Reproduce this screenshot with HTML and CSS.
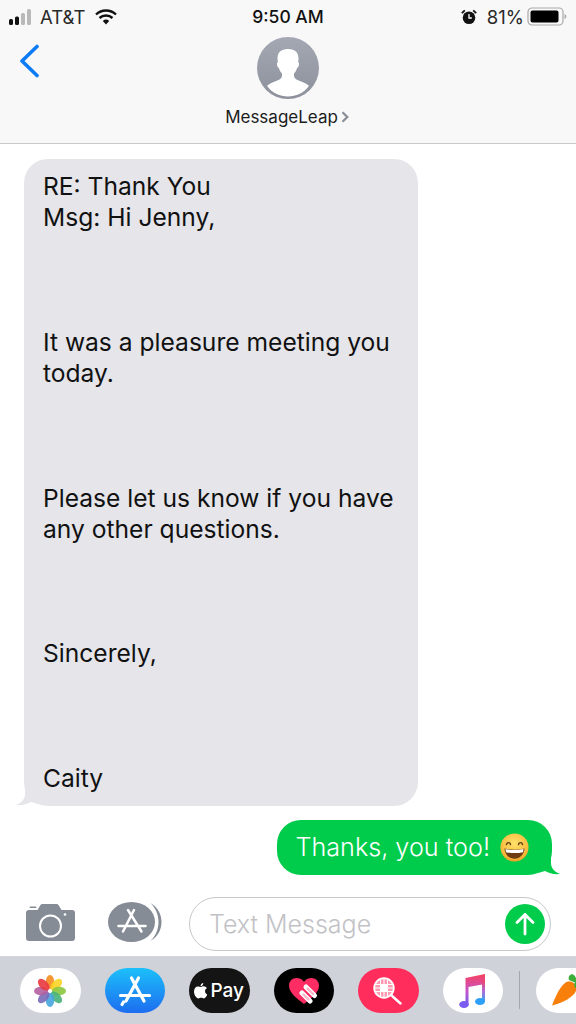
FILE: index.html
```html
<!DOCTYPE html>
<html lang="en">
<head>
<meta charset="utf-8">
<title>Messages</title>
<link rel="stylesheet" href="styles.css">
</head>
<body>
<div class="phone">
  <header class="top">
    <div class="status">
      <div class="status-left">
        <svg class="signal" width="26" height="16" viewBox="0 0 26 16"><rect x="0" y="10" width="4" height="6" rx="1.5" fill="#111"/><rect x="6" y="7.500" width="4" height="8.500" rx="1.500" fill="#111"/><rect x="12" y="4" width="4" height="12" rx="1.500" fill="#b9b9b9"/><rect x="18" y="0" width="4" height="16" rx="1.500" fill="#b9b9b9"/></svg>
        <span class="carrier">AT&amp;T</span>
        <svg class="wifi" width="22" height="16" viewBox="0 0 22 16"><path d="M1 5.500a14.500 14.500 0 0 1 20 0" fill="none" stroke="#111" stroke-width="2.400"/><path d="M4.500 9a9.500 9.500 0 0 1 13 0" fill="none" stroke="#111" stroke-width="2.400"/><path d="M7.800 11.900a4.700 4.700 0 0 1 6.400 0L11 15.500z" fill="#111"/></svg>
      </div>
      <div class="clock">9:50 AM</div>
      <div class="status-right">
        <svg class="alarm" width="16" height="16" viewBox="0 0 16 16"><circle cx="8" cy="8.800" r="6.300" fill="#111"/><path d="M8 5v4l2.800 0" fill="none" stroke="#fff" stroke-width="1.300"/><path d="M.8 4.200 3.800 1.300M15.200 4.200 12.200 1.300" stroke="#111" stroke-width="1.800"/></svg>
        <span class="pct">81%</span>
        <svg class="battery" width="40" height="19" viewBox="0 0 40 19"><rect x="1" y="1" width="35" height="17" rx="4" fill="none" stroke="#a9a9a9" stroke-width="1.200"/><rect x="3.500" y="3.500" width="28" height="12" rx="2" fill="#000"/><path d="M37.500 7v5c1.300-.5 1.800-1.400 1.800-2.500S38.800 7.500 37.500 7z" fill="#a9a9a9"/></svg>
      </div>
    </div>
    <div class="nav">
      <svg class="back" width="22" height="34" viewBox="0 0 22 34"><path d="M19 2.500 4 17l15 14.500" fill="none" stroke="#0b7cf5" stroke-width="3.600" stroke-linecap="round" stroke-linejoin="round"/></svg>
      <div class="contact">
        <svg class="avatar" width="62" height="62" viewBox="0 0 62 62">
          <defs><linearGradient id="av" x1="0" y1="0" x2="0" y2="1"><stop offset="0" stop-color="#a4a8b3"/><stop offset="1" stop-color="#8d919c"/></linearGradient></defs>
          <circle cx="31" cy="31" r="31" fill="url(#av)"/>
          <path d="M30.500 12c-6.500 0-10 3.500-10 9.500 0 1 .2 2.500 .3 4-.8 0-1 .8-.8 2 .2 1.800 .8 3.200 1.800 3.300 .7 2.700 2 4.500 3.200 5.700 .3 3.200-.5 5-2.500 6-3.500 1.600-8 2.700-12.500 6.300C15.500 56.500 23 59.500 31 59.500s15.500-3 21-10.700c-4.500-3.600-9-4.700-12.500-6.300-2-1-2.800-2.800-2.500-6 1.200-1.200 2.500-3 3.200-5.700 1-.1 1.600-1.500 1.800-3.300 .2-1.200 0-2-.8-2 .1-1.500 .3-3 .3-4 0-6-3.500-9.500-10-9.500z" fill="#fff"/>
        </svg>
        <div class="contact-name"><span>MessageLeap</span><svg width="8" height="12" viewBox="0 0 8 12"><path d="M1.500 1.200 6.300 6l-4.800 4.800" fill="none" stroke="#8b8f98" stroke-width="2.300"/></svg></div>
      </div>
    </div>
  </header>

  <main class="thread">
    <div class="bubble-row in">
      <div class="bubble grey">
        <p>RE: Thank You<br>Msg: Hi Jenny,<br><br><br><br>It was a pleasure meeting you<br>today.<br><br><br><br>Please let us know if you have<br>any other questions.<br><br><br><br>Sincerely,<br><br><br><br>Caity</p>
        <svg class="tail tail-in" width="22" height="20" viewBox="0 0 22 20"><path d="M9 0v8C9 13 6 16.500 0 19c6 .5 11-.5 15-3l7 2V0z" fill="#e5e5ea"/></svg>
      </div>
    </div>
    <div class="bubble-row out">
      <div class="bubble green">
        <span>Thanks, you too!</span>
        <svg class="emoji" width="29" height="29" viewBox="0 0 29 29">
          <defs><radialGradient id="em" cx=".5" cy=".35" r=".75"><stop offset="0" stop-color="#ffe16b"/><stop offset=".7" stop-color="#f7b93a"/><stop offset="1" stop-color="#e08a1e"/></radialGradient></defs>
          <circle cx="14.500" cy="14.500" r="14" fill="url(#em)"/>
          <path d="M6.500 11.500c.5-2.500 3.500-2.500 4 0M18.500 11.500c.5-2.500 3.500-2.500 4 0" fill="none" stroke="#5d3a12" stroke-width="1.400" stroke-linecap="round"/>
          <path d="M4.500 15.500c6.500 1.600 13.500 1.600 20 0-.2 6-4.500 10.200-10 10.200s-9.800-4.200-10-10.200z" fill="#6d3c10"/>
          <path d="M5.500 16c6 1.300 12 1.300 18 0l-.4 3.200c-5.500 1.200-11.700 1.200-17.200 0z" fill="#fff"/>
        </svg>
        <svg class="tail tail-out" width="22" height="20" viewBox="0 0 22 20"><path d="M13 0v8c0 5 3 8.500 9 11-6 .5-11-.5-15-3l-7 2V0z" fill="#00cc4c"/></svg>
      </div>
    </div>
  </main>

  <div class="composer">
    <svg class="camera" width="49" height="37" viewBox="0 0 49 37"><rect x="3.500" y="2.500" width="7" height="1.600" rx=".8" fill="#868c96"/><path d="M3 6h8.500l2.500-4.300C14.600 .6 15.400 0 16.600 0h13.800c1.200 0 2 .6 2.600 1.700L35.500 6H46c2 0 3 1 3 3v25c0 2-1 3-3 3H3c-2 0-3-1-3-3V9c0-2 1-3 3-3z" fill="#868c96"/><circle cx="24.500" cy="22" r="10.500" fill="none" stroke="#fff" stroke-width="2"/><circle cx="39" cy="10.500" r="1.300" fill="#fff"/></svg>
    <svg class="apps" width="54" height="40" viewBox="0 0 54 40"><ellipse cx="23.500" cy="20" rx="23.500" ry="20" fill="#868c96"/><path d="M42.500 1C49.500 5 53.500 12 53.500 20S49.500 35 42.500 39C47.500 34 50.500 27.500 50.500 20S47.500 6 42.500 1z" fill="#868c96"/><path d="M26 8 15 29.500M20 8l13.500 21.500M10.500 24h27" fill="none" stroke="#fff" stroke-width="2.500" stroke-linecap="round"/></svg>
    <div class="field">
      <span class="placeholder">Text Message</span>
      <svg class="send" width="40" height="40" viewBox="0 0 40 40"><circle cx="20" cy="20" r="20" fill="#00cc4c"/><path d="M20 30V10.500M12 18.500l8-8 8 8" fill="none" stroke="#fff" stroke-width="2.800" stroke-linecap="round" stroke-linejoin="round"/></svg>
    </div>
  </div>

  <nav class="drawer">
    <div class="pill white">
      <svg width="32" height="32" viewBox="0 0 34 34">
        <g transform="translate(17 17)">
          <ellipse cy="-9.500" rx="4.500" ry="7.500" fill="#f68b1f" fill-opacity=".9"/>
          <ellipse cy="-9.500" rx="4.500" ry="7.500" fill="#f9d423" fill-opacity=".9" transform="rotate(45)"/>
          <ellipse cy="-9.500" rx="4.500" ry="7.500" fill="#8cc63f" fill-opacity=".9" transform="rotate(90)"/>
          <ellipse cy="-9.500" rx="4.500" ry="7.500" fill="#48b37a" fill-opacity=".9" transform="rotate(135)"/>
          <ellipse cy="-9.500" rx="4.500" ry="7.500" fill="#45a5e0" fill-opacity=".9" transform="rotate(180)"/>
          <ellipse cy="-9.500" rx="4.500" ry="7.500" fill="#7a6bb8" fill-opacity=".9" transform="rotate(225)"/>
          <ellipse cy="-9.500" rx="4.500" ry="7.500" fill="#b45fa0" fill-opacity=".9" transform="rotate(270)"/>
          <ellipse cy="-9.500" rx="4.500" ry="7.500" fill="#e8383f" fill-opacity=".9" transform="rotate(315)"/>
        </g>
      </svg>
    </div>
    <div class="pill blue">
      <svg width="36" height="32" viewBox="0 0 36 32"><path d="M21.500 3 9 26M14.500 3 27 26M3.500 20.500h29M6.500 27l-1.500 2.500" fill="none" stroke="#fff" stroke-width="3.200" stroke-linecap="round"/></svg>
    </div>
    <div class="pill black pay">
      <svg width="13" height="16" viewBox="0 0 14 17"><path d="M10 0c.1 1.600-1.300 3.500-3 3.500C6.800 1.900 8.400.2 10 0zM7.100 4.300c.9 0 1.900-.8 3.300-.8 1.500 0 2.800.8 3.400 2-2.900 1.700-2.400 5.600.6 6.800-.7 1.800-2.200 4.200-3.700 4.200-1.200 0-1.600-.7-3-.7s-1.900.7-3 .7C2.600 16.500 0 12.500 0 9c0-3.400 2.200-5.400 4.200-5.400 1.300 0 2.200.7 2.900.7z" fill="#fff"/></svg>
      <span>Pay</span>
    </div>
    <div class="pill black heart">
      <svg width="30" height="26" viewBox="0 0 30 26"><path d="M15 26C9 21 0 15.500 0 7.500 0 3 3.500 0 7.500 0 10.800 0 13.500 1.500 15 4c1.500-2.500 4.200-4 7.500-4C26.500 0 30 3 30 7.500 30 15.500 21 21 15 26z" fill="#ff2d64"/><path d="M13 15l8 8" stroke="#fff" stroke-width="5" stroke-linecap="round"/><path d="M17 9l8.500 8.500" stroke="#fff" stroke-width="5" stroke-linecap="round"/><path d="M14.500 16.500l5 5M18.500 10.500l5.500 5.500" stroke="#f7b6c6" stroke-width="2.400" stroke-linecap="round"/></svg>
    </div>
    <div class="pill pink">
      <svg width="30" height="28" viewBox="0 0 30 28"><circle cx="11" cy="11" r="9.800" fill="#ff9ab0" stroke="#fff" stroke-width="1.800"/><path d="M2 7.500h18M1.500 11h19M2 14.500h18M7.500 2v18M11 1.500v19M14.500 2v18" stroke="#fff" stroke-width="1"/><rect x="8" y="8" width="6" height="6" fill="#fff"/><path d="M18 18l9.500 8.500" stroke="#fff" stroke-width="2.400" stroke-linecap="round"/></svg>
    </div>
    <div class="pill white">
      <svg width="27" height="34" viewBox="0 0 27 34"><defs><linearGradient id="mu" x1="0" y1="0" x2="0" y2="1"><stop offset="0" stop-color="#f8405d"/><stop offset=".55" stop-color="#c556c9"/><stop offset="1" stop-color="#7059f0"/></linearGradient><linearGradient id="mu2" x1="0" y1="0" x2="0" y2="1"><stop offset="0" stop-color="#f8405d"/><stop offset=".5" stop-color="#b06ad8"/><stop offset="1" stop-color="#2fa8f8"/></linearGradient></defs><path d="M6.500 4 26 0v10L9.500 13v18h-3z" fill="url(#mu)"/><path d="M23 6h3v22h-3z" fill="url(#mu2)"/><ellipse cx="5" cy="30.500" rx="4.800" ry="3.500" fill="#7a5cf0"/><ellipse cx="21" cy="27.500" rx="5" ry="3.500" fill="#2fa0f8"/></svg>
    </div>
    <div class="sep"></div>
    <div class="pill white carrot">
      <svg width="40" height="38" viewBox="0 0 40 38"><path d="M0 33.500C3 26 7 16 13 11c4-3 10-1 11 4 1 4-1 6-4 9C14 29 7 32 0 33.500z" fill="#f77f0a"/><path d="M17 8c-1-3 0-5 3-6 3 1 5 4 4 9zM22 12c1-2 3-3 5-3 1 3-1 6-4 7z" fill="#3dae3a"/></svg>
    </div>
  </nav>
</div>
</body>
</html>
```

FILE: styles.css
```css
* { box-sizing: border-box; }
html, body { margin: 0; padding: 0; background: #fff; }
body { font-family: Inter, "Liberation Sans", sans-serif; color: #111; }
.phone { width: 576px; height: 1024px; display: flex; flex-direction: column; overflow: hidden; }

.top { height: 144px; background: #f8f8f8; border-bottom: 1px solid #c9c9cb; flex: none; }
.status { height: 30px; padding: 3px 9px 0 9px; display: grid; grid-template-columns: 1fr auto 1fr; align-items: center; font-size: 18.500px; }
.status-left { display: flex; align-items: center; }
.signal { margin-right: 5px; }
.carrier { color: #2a2a2a; }
.wifi { margin-left: 10px; }
.clock { font-size: 17.500px; font-weight: 500; color: #111; }
.status-right { display: flex; align-items: center; justify-content: flex-end; }
.pct { margin: 0 3px 0 10px; color: #2a2a2a; }
.alarm { flex: none; }
.battery { flex: none; }

.nav { position: relative; display: flex; justify-content: center; height: 113px; }
.back { position: absolute; left: 18px; top: 14px; }
.contact { display: flex; flex-direction: column; align-items: center; padding-top: 7px; }
.contact-name { display: flex; align-items: center; gap: 3px; margin-top: 8px; margin-left: -2px; font-size: 17px; color: #1c1c1c; }

.thread { flex: 1; padding-top: 15px; display: flex; flex-direction: column; gap: 14px; }
.bubble-row { display: flex; }
.bubble-row.in { padding-left: 24px; }
.bubble-row.out { justify-content: flex-end; padding-right: 24px; }
.bubble { position: relative; border-radius: 24px; }
.bubble p { margin: 0; position: relative; z-index: 1; }
.grey { width: 394px; height: 647px; padding: 12px 19px; background: #e5e5ea; line-height: 31.150px; color: #111; font-size: 24.600px; }
.green { height: 55px; padding: 0 23px 2px 18px; background: #00cc4c; color: #fff; display: flex; align-items: center; gap: 10px; font-weight: 300; font-size: 25.200px; }
.green span { position: relative; z-index: 1; }
.emoji { flex: none; position: relative; z-index: 1; margin-top: 2px; }
.tail { position: absolute; bottom: 0; }
.tail-in { left: -8px; }
.tail-out { right: -8px; }

.composer { flex: none; height: 68px; padding: 9px 25px 0 26px; display: flex; align-items: flex-start; background: #fff; }
.camera { margin-top: 7px; flex: none; }
.apps { margin: 5px 0 0 33px; flex: none; }
.field { margin-left: 27px; width: 362px; height: 54px; border: 1.500px solid #c8c8cc; border-radius: 27px; display: flex; align-items: center; justify-content: space-between; padding: 0 5px 0 19px; background: #fff; }
.placeholder { font-size: 25px; font-weight: 300; color: #c2c2c6; }
.send { flex: none; }

.drawer { flex: none; height: 68px; background: #cfd2d9; border-top: 1px solid #d5d7dc; padding: 11px 0 0 20px; display: flex; gap: 24px; align-items: flex-start; overflow: hidden; }
.pill { flex: none; width: 60.500px; height: 45px; border-radius: 23px; display: flex; align-items: center; justify-content: center; }
.white { background: #fff; }
.blue { background: linear-gradient(180deg, #1cc0fa, #1d6df0); }
.black { background: #000; }
.pink { background: #ff2d5b; }
.pay { color: #fff; font-size: 19px; font-weight: 500; gap: 3px; background: #141414; }
.sep { flex: none; width: 1px; height: 38px; margin: 3px 0 0 -8px; background: #a5a8ae; }
.carrot { margin-left: -8px; justify-content: flex-start; padding-left: 16px; }
```
